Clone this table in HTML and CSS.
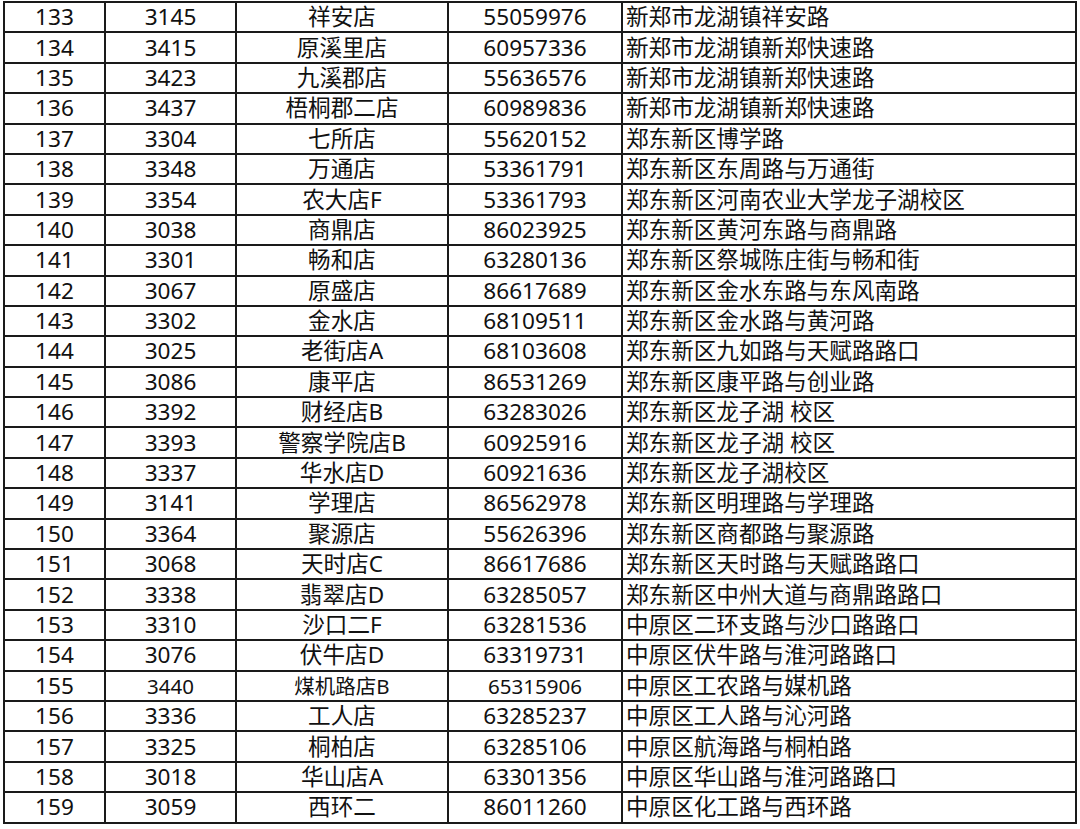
FILE: index.html
```html
<!DOCTYPE html>
<html lang="zh">
<head>
<meta charset="utf-8">
<link rel="stylesheet" href="styles.css">
</head>
<body>
<table class="stores">
<colgroup><col class="c1"><col class="c2"><col class="c3"><col class="c4"><col class="c5"></colgroup>
<tbody>
<tr><td>133</td><td>3145</td><td>祥安店</td><td>55059976</td><td class="addr">新郑市龙湖镇祥安路</td></tr>
<tr><td>134</td><td>3415</td><td>原溪里店</td><td>60957336</td><td class="addr">新郑市龙湖镇新郑快速路</td></tr>
<tr><td>135</td><td>3423</td><td>九溪郡店</td><td>55636576</td><td class="addr">新郑市龙湖镇新郑快速路</td></tr>
<tr><td>136</td><td>3437</td><td>梧桐郡二店</td><td>60989836</td><td class="addr">新郑市龙湖镇新郑快速路</td></tr>
<tr><td>137</td><td>3304</td><td>七所店</td><td>55620152</td><td class="addr">郑东新区博学路</td></tr>
<tr><td>138</td><td>3348</td><td>万通店</td><td>53361791</td><td class="addr">郑东新区东周路与万通街</td></tr>
<tr><td>139</td><td>3354</td><td>农大店F</td><td>53361793</td><td class="addr">郑东新区河南农业大学龙子湖校区</td></tr>
<tr><td>140</td><td>3038</td><td>商鼎店</td><td>86023925</td><td class="addr">郑东新区黄河东路与商鼎路</td></tr>
<tr><td>141</td><td>3301</td><td>畅和店</td><td>63280136</td><td class="addr">郑东新区祭城陈庄街与畅和街</td></tr>
<tr><td>142</td><td>3067</td><td>原盛店</td><td>86617689</td><td class="addr">郑东新区金水东路与东风南路</td></tr>
<tr><td>143</td><td>3302</td><td>金水店</td><td>68109511</td><td class="addr">郑东新区金水路与黄河路</td></tr>
<tr><td>144</td><td>3025</td><td>老街店A</td><td>68103608</td><td class="addr">郑东新区九如路与天赋路路口</td></tr>
<tr><td>145</td><td>3086</td><td>康平店</td><td>86531269</td><td class="addr">郑东新区康平路与创业路</td></tr>
<tr><td>146</td><td>3392</td><td>财经店B</td><td>63283026</td><td class="addr">郑东新区龙子湖 校区</td></tr>
<tr><td>147</td><td>3393</td><td>警察学院店B</td><td>60925916</td><td class="addr">郑东新区龙子湖 校区</td></tr>
<tr><td>148</td><td>3337</td><td>华水店D</td><td>60921636</td><td class="addr">郑东新区龙子湖校区</td></tr>
<tr><td>149</td><td>3141</td><td>学理店</td><td>86562978</td><td class="addr">郑东新区明理路与学理路</td></tr>
<tr><td>150</td><td>3364</td><td>聚源店</td><td>55626396</td><td class="addr">郑东新区商都路与聚源路</td></tr>
<tr><td>151</td><td>3068</td><td>天时店C</td><td>86617686</td><td class="addr">郑东新区天时路与天赋路路口</td></tr>
<tr><td>152</td><td>3338</td><td>翡翠店D</td><td>63285057</td><td class="addr">郑东新区中州大道与商鼎路路口</td></tr>
<tr><td>153</td><td>3310</td><td>沙口二F</td><td>63281536</td><td class="addr">中原区二环支路与沙口路路口</td></tr>
<tr><td>154</td><td>3076</td><td>伏牛店D</td><td>63319731</td><td class="addr">中原区伏牛路与淮河路路口</td></tr>
<tr><td>155</td><td class="sm">3440</td><td class="sm">煤机路店B</td><td class="sm">65315906</td><td class="addr">中原区工农路与媒机路</td></tr>
<tr><td>156</td><td>3336</td><td>工人店</td><td>63285237</td><td class="addr">中原区工人路与沁河路</td></tr>
<tr><td>157</td><td>3325</td><td>桐柏店</td><td>63285106</td><td class="addr">中原区航海路与桐柏路</td></tr>
<tr><td>158</td><td>3018</td><td>华山店A</td><td>63301356</td><td class="addr">中原区华山路与淮河路路口</td></tr>
<tr><td>159</td><td>3059</td><td>西环二</td><td>86011260</td><td class="addr">中原区化工路与西环路</td></tr>
</tbody>
</table>
</body>
</html>
```

FILE: styles.css
```css
html, body {
  margin: 0;
  padding: 0;
  background: #ffffff;
}
body {
  padding: 1px 0 0 3px;
}
.stores {
  border-collapse: collapse;
  table-layout: fixed;
  width: 1072px;
  font-family: "Noto Sans", "Noto Sans CJK SC", sans-serif;
  font-size: 22.6px;
  color: #111111;
}
.c1 { width: 101px; }
.c2 { width: 131px; }
.c3 { width: 212px; }
.c4 { width: 174px; }
.c5 { width: 454px; }
.stores td {
  border: 2px solid #1a1a1a;
  height: 28.4px;
  padding: 0;
  text-align: center;
  vertical-align: middle;
  line-height: 26px;
  white-space: nowrap;
  overflow: hidden;
}
.stores td.addr {
  text-align: left;
  padding-left: 3px;
}
.stores td.sm {
  font-size: 20.5px;
}
```
